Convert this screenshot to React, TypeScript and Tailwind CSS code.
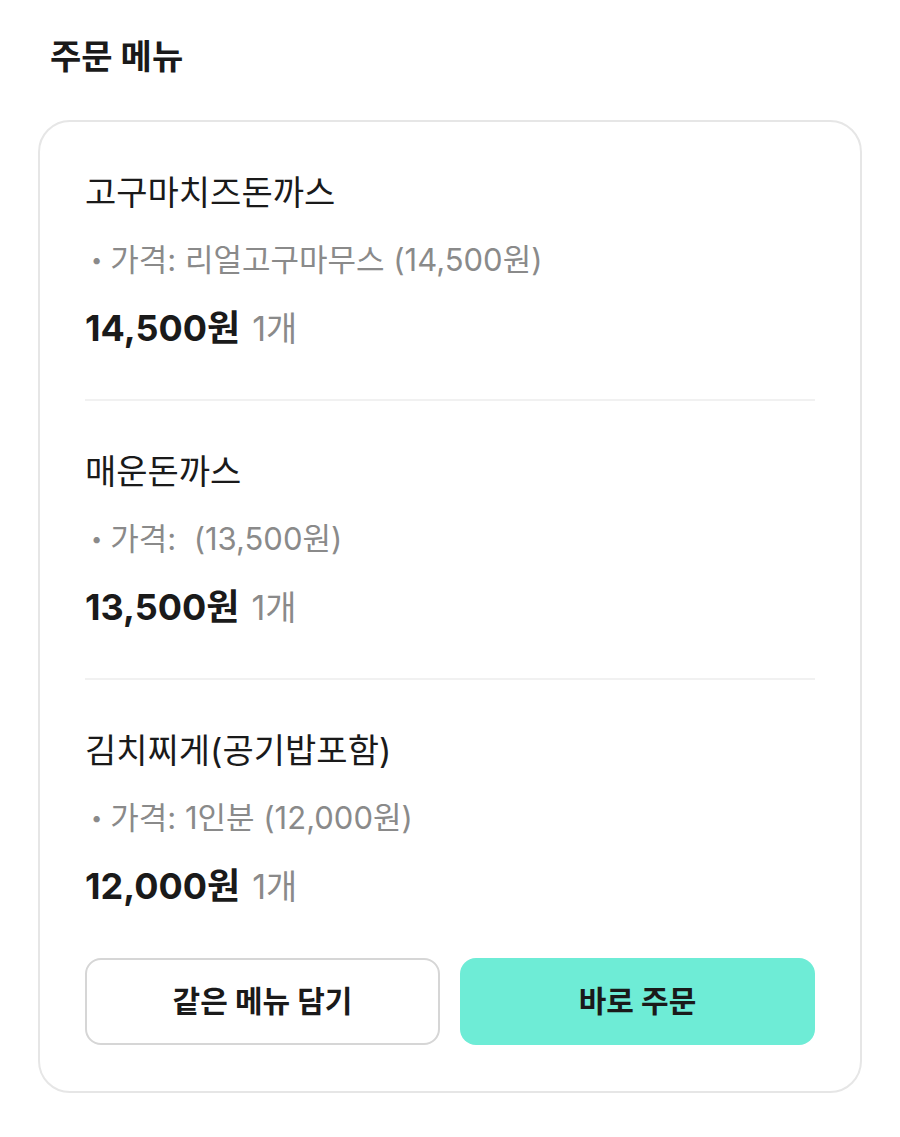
const FONT = { fontFamily: 'Inter, "Noto Sans CJK KR", "Noto Sans", sans-serif' };

type Item = { name: string; option: string; price: string; qty: string };

const ITEMS: Item[] = [
  { name: '고구마치즈돈까스', option: '가격: 리얼고구마무스 (14,500원)', price: '14,500원', qty: '1개' },
  { name: '매운돈까스', option: '가격:  (13,500원)', price: '13,500원', qty: '1개' },
  { name: '김치찌게(공기밥포함)', option: '가격: 1인분 (12,000원)', price: '12,000원', qty: '1개' },
];

function OrderItem({ item, last }: { item: Item; last: boolean }) {
  return (
    <div className={last ? '' : 'pb-[51px] mb-[51px] border-b-2 border-[#f1f1f1]'}>
      <div className="text-[34px] leading-[40px] text-[#1a1a1a]">{item.name}</div>
      <div className="mt-[29px] flex items-center h-[36px] text-[31px] leading-[36px] text-[#8a8a8a] whitespace-pre">
        <span className="ml-[6px] mr-[8px] text-[20px]">•</span>
        {item.option}
      </div>
      <div className="mt-[30px] flex items-baseline h-[40px] leading-[40px] overflow-visible">
        <span className="text-[36px] font-bold text-[#1a1a1a]">{item.price}</span>
        <span className="ml-[12px] text-[34px] text-[#8a8a8a]">{item.qty}</span>
      </div>
    </div>
  );
}

export default function App() {
  return (
    <div className="w-[900px] min-h-[1137px] bg-white" style={FONT}>
      <div className="pt-[37px] pl-[50px] text-[34px] leading-[40px] font-bold text-[#1a1a1a]">주문 메뉴</div>
      <div className="mx-[38px] mt-[43px] rounded-[32px] border-2 border-[#e6e6e6] px-[45px] pt-[51px] pb-[46px]">
        {ITEMS.map((item, i) => (
          <OrderItem key={i} item={item} last={i === ITEMS.length - 1} />
        ))}
        <div className="mt-[52px] grid grid-cols-[355px_355px] gap-[20px]">
          <button className="h-[87px] rounded-[16px] border-2 border-[#d6d6d6] bg-white text-[30px] font-bold text-[#1a1a1a]">
            같은 메뉴 담기
          </button>
          <button className="h-[87px] rounded-[16px] bg-[#6eecd6] text-[30px] font-bold text-[#1a1a1a]">
            바로 주문
          </button>
        </div>
      </div>
    </div>
  );
}
